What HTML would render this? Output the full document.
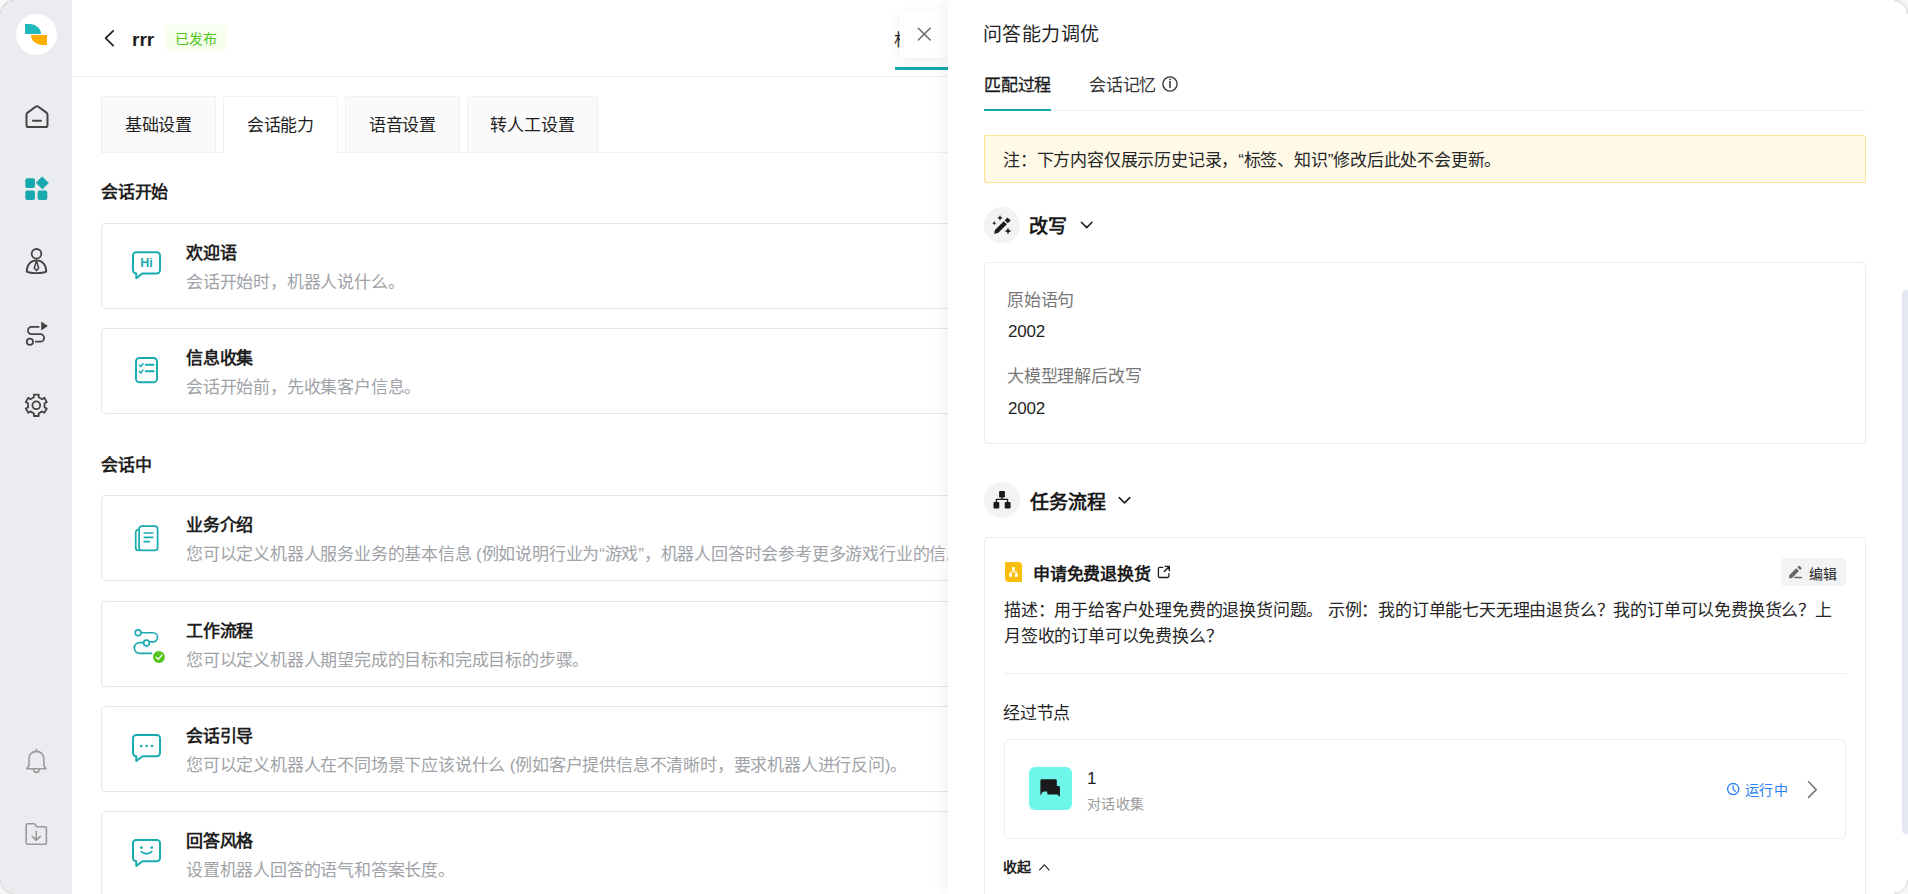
<!DOCTYPE html>
<html lang="zh-CN"><head><meta charset="utf-8">
<style>
*{box-sizing:border-box;margin:0;padding:0}
html,body{width:1908px;height:894px;overflow:hidden;background:#fff}
body{font-family:"Liberation Sans",sans-serif;color:#1f1f1f;position:relative}
.abs{position:absolute}
svg.abs{overflow:visible}
#sidebar{position:absolute;left:0;top:0;width:72px;height:894px;background:#ebecf0}
#main{position:absolute;left:72px;top:0;width:1836px;height:894px;background:#fff;overflow:hidden}
.rrr{font-size:19px;font-weight:bold;line-height:24px;color:#1f1f1f}
.tag{width:62px;height:26px;background:#f6ffed;color:#52c41a;font-size:14px;letter-spacing:0.3px;line-height:29px;text-align:center;border-radius:2px}
.hdr-line{position:absolute;left:0;top:76px;width:1836px;height:1px;background:#ededed}
.tab{position:absolute;top:96px;height:57px;border:1px solid #f0f0f0;border-bottom:none;background:#fafafa;border-radius:2px 2px 0 0;font-size:17px;letter-spacing:-0.2px;line-height:58px;text-align:center;color:#1f1f1f}
.tab.on{background:#fff;height:57px;z-index:2}
.tabline{position:absolute;top:152px;left:29px;height:1px;width:1800px;background:#f0f0f0}
.sec{position:absolute;left:29px;font-size:17px;letter-spacing:-0.2px;font-weight:bold;color:#1f1f1f;line-height:20px}
.card{position:absolute;left:29px;width:1780px;height:86px;border:1px solid #e8e8e8;border-radius:4px;background:#fff}
.card .t{position:absolute;left:84px;top:19px;font-size:17px;letter-spacing:-0.2px;font-weight:bold;line-height:22px;color:#1f1f1f;white-space:nowrap}
.card .d{position:absolute;left:84px;top:47.5px;font-size:17px;letter-spacing:-0.2px;line-height:22px;color:#a0a3a8;white-space:nowrap}
#drawer{position:absolute;left:948px;top:0;width:960px;height:894px;background:#fff;box-shadow:-4px 0 14px rgba(0,0,0,0.05);overflow:hidden}
.dtitle{font-size:19px;letter-spacing:0.4px;line-height:24px;color:#1f1f1f;white-space:nowrap}
.dtab{font-size:17px;letter-spacing:-0.2px;line-height:22px;white-space:nowrap}
.alert{background:#fff9e7;border:1px solid #ffe38c;border-radius:2px;font-size:17px;letter-spacing:-0.2px;line-height:50px;padding-left:18px;color:#262626;white-space:nowrap}
.circ{width:36px;height:36px;border-radius:50%;background:#f2f3f5}
.shdr{font-size:19px;letter-spacing:-0.1px;font-weight:bold;line-height:24px;color:#1a1a1a;white-space:nowrap}
.bcard{border:1px solid #ececec;border-radius:4px;background:#fff}
.lbl{font-size:17px;letter-spacing:-0.2px;line-height:22px;color:#787878;white-space:nowrap}
.num{font-size:17px;letter-spacing:-0.2px;line-height:22px;color:#1f1f1f;white-space:nowrap}
.bold17{font-size:17px;letter-spacing:-0.2px;font-weight:bold;line-height:22px;color:#1a1a1a;white-space:nowrap}
.editbtn{background:#f2f3f5;border-radius:4px;font-size:14px;letter-spacing:0.3px;line-height:18px;color:#262626}
.desc{font-size:17px;letter-spacing:-0.2px;line-height:26px;color:#262626;white-space:nowrap}
.small{font-size:14px;letter-spacing:0.3px;line-height:18px;color:#9a9a9a;white-space:nowrap}
.run{font-size:14px;letter-spacing:0.3px;line-height:18px;color:#2a7ff3;white-space:nowrap}
.shou{font-size:14px;letter-spacing:0.3px;font-weight:bold;line-height:18px;color:#1f1f1f;white-space:nowrap}
</style></head><body>
<div id="sidebar">
  <div class="abs" style="left:16px;top:14px;width:41px;height:41px;border-radius:50%;background:#fff"></div>
  <div class="abs" style="left:25px;top:24px;width:16px;height:10px;background:#22b9bd;border-top-right-radius:11px 10px"></div>
  <div class="abs" style="left:31px;top:35px;width:16px;height:10px;background:#ffae00;border-bottom-left-radius:11px 10px"></div>
  <svg class="abs" style="left:0;top:0" width="72" height="894" viewBox="0 0 72 894" fill="none" stroke-linecap="round" stroke-linejoin="round">
    <g stroke="#444" stroke-width="2">
      <path d="M35.6 106.7 a2.3 2.3 0 0 1 2.8 0 L46.4 112.6 a2.6 2.6 0 0 1 1.1 2.1 V124.9 a2.2 2.2 0 0 1 -2.2 2.2 H28.7 a2.2 2.2 0 0 1 -2.2 -2.2 V114.7 a2.6 2.6 0 0 1 1.1 -2.1 Z"/>
      <path d="M33 120.7 H41"/>
    </g>
    <g fill="#16a9ad">
      <rect x="25.3" y="178.3" width="9.7" height="9.6" rx="2"/>
      <rect x="25.3" y="190.4" width="9.7" height="9.6" rx="2"/>
      <rect x="37.6" y="190.4" width="9.7" height="9.6" rx="2"/>
      <path d="M42.4 177.2 L48.3 183 L42.4 188.8 L36.5 183 Z" stroke="#16a9ad" stroke-width="1" stroke-linejoin="round"/>
    </g>
    <g stroke="#444" stroke-width="1.8">
      <circle cx="36.5" cy="253.8" r="4.8"/>
      <path d="M26.7 271.6 C26.7 264.5 31 260.4 36.5 260.4 C42 260.4 46.3 264.5 46.3 271.6 C42 273.6 31 273.6 26.7 271.6 Z"/>
      <path d="M36.5 260.6 L34.3 268.3 L36.5 270.6 L38.7 268.3 Z" stroke-width="1.5"/>
    </g>
    <g stroke="#444" stroke-width="1.8">
      <circle cx="29.9" cy="341.8" r="3.1"/>
      <path d="M38.6 326.9 H31.6 A3.65 3.65 0 0 0 31.6 334.2 H40.4 A3.7 3.7 0 0 1 40.4 341.6 H35.8"/>
    </g>
    <path d="M41.2 321.5 L47.9 326.1 L41.2 330.6 Z" fill="#444"/>
    <g stroke="#444" stroke-width="1.8">
      <path d="M32.20 398.20 L33.96 397.13 L33.83 394.58 L38.77 394.58 L38.64 397.13 L40.40 398.20 L42.20 399.19 L44.34 397.80 L46.82 402.08 L44.55 403.24 L44.50 405.30 L44.55 407.36 L46.82 408.52 L44.34 412.80 L42.20 411.41 L40.40 412.40 L38.64 413.47 L38.77 416.02 L33.83 416.02 L33.96 413.47 L32.20 412.40 L30.40 411.41 L28.26 412.80 L25.78 408.52 L28.05 407.36 L28.10 405.30 L28.05 403.24 L25.78 402.08 L28.26 397.80 L30.40 399.19 Z"/>
      <circle cx="36.3" cy="405.3" r="3.9"/>
    </g>
    <g stroke="#9a9a9a" stroke-width="1.6">
      <path d="M26.8 768.8 L29 765.5 V758.5 C29 754.2 32.3 751.4 36.4 751.4 C40.5 751.4 43.8 754.2 43.8 758.5 V765.5 L46 768.8 Z"/>
      <path d="M36.4 749.6 V751.4"/>
      <path d="M33.6 769.6 A2.8 2.8 0 0 0 39.2 769.6"/>
    </g>
    <g stroke="#9a9a9a" stroke-width="1.6">
      <path d="M26.2 825 a1.2 1.2 0 0 1 1.2 -1.2 H34.4 L36.8 826.8 H45.2 a1.2 1.2 0 0 1 1.2 1.2 V843 a1.2 1.2 0 0 1 -1.2 1.2 H27.4 a1.2 1.2 0 0 1 -1.2 -1.2 Z"/>
      <path d="M36.3 831.3 V840.4 M32.3 836.4 L36.3 840.4 L40.3 836.4"/>
    </g>
  </svg>
</div>
<div id="main">
  <svg class="abs" style="left:28px;top:26px" width="20" height="24" viewBox="100 26 20 24" fill="none"><path d="M113.2 30.8 L105.6 38.2 L113.2 45.6" stroke="#1f1f1f" stroke-width="1.7" stroke-linecap="round" stroke-linejoin="round"/></svg>
  <div class="abs rrr" style="left:60px;top:28px">rrr</div>
  <div class="abs tag" style="left:93px;top:25px">已发布</div>
  <div class="abs" style="left:810px;top:0;width:18px;height:76px;overflow:hidden"><div class="abs" style="left:12px;top:30px;font-size:17px;letter-spacing:-0.2px;line-height:22px;color:#1f1f1f">机</div></div>
  <div class="abs" style="left:823px;top:67px;width:60px;height:3px;background:#14a9ad"></div>
  <div class="hdr-line"></div>
  <div class="tab" style="left:29px;width:115px">基础设置</div>
  <div class="tab on" style="left:151px;width:115px">会话能力</div>
  <div class="tab" style="left:273px;width:115px">语音设置</div>
  <div class="tab" style="left:395px;width:131px">转人工设置</div>
  <div class="tabline"></div>
  <div class="sec" style="top:182.5px">会话开始</div>
  <div class="card" style="top:223px"><div class="t">欢迎语</div><div class="d">会话开始时，机器人说什么。</div></div>
  <div class="card" style="top:328px"><div class="t">信息收集</div><div class="d">会话开始前，先收集客户信息。</div></div>
  <div class="sec" style="top:455.5px">会话中</div>
  <div class="card" style="top:495px"><div class="t">业务介绍</div><div class="d">您可以定义机器人服务业务的基本信息 (例如说明行业为“游戏”，机器人回答时会参考更多游戏行业的信息)。</div></div>
  <div class="card" style="top:601px"><div class="t">工作流程</div><div class="d">您可以定义机器人期望完成的目标和完成目标的步骤。</div></div>
  <div class="card" style="top:706px"><div class="t">会话引导</div><div class="d">您可以定义机器人在不同场景下应该说什么 (例如客户提供信息不清晰时，要求机器人进行反问)。</div></div>
  <div class="card" style="top:811px"><div class="t">回答风格</div><div class="d">设置机器人回答的语气和答案长度。</div></div>
</div>
<svg class="abs" style="left:0;top:0" width="948" height="894" viewBox="0 0 948 894" fill="none" stroke-linecap="round" stroke-linejoin="round">
  <g stroke="#19abb0" stroke-width="2">
    <path d="M136.2 252.3 H156.8 a3.2 3.2 0 0 1 3.2 3.2 V270.2 a3.2 3.2 0 0 1 -3.2 3.2 H142.5 L136.3 278.2 V273.4 H136.2 a3.2 3.2 0 0 1 -3.2 -3.2 V255.5 a3.2 3.2 0 0 1 3.2 -3.2 Z"/>
    <rect x="136" y="358" width="21" height="24.3" rx="3.6"/>
    <path d="M139.3 365.2 L140.9 366.6 L143 363.7 M139.3 371.6 L140.9 373 L143 370.1" stroke-width="1.5"/>
    <path d="M145.8 364.7 H153.6 M145.8 371.2 H153.6"/>
    <path d="M139 529.6 a3 3 0 0 0 -3.3 3 V547.5 a3 3 0 0 0 3 3" stroke-width="1.7"/>
    <rect x="139.1" y="526.1" width="18.5" height="24.3" rx="3" stroke-width="1.7"/>
    <path d="M144.3 533 H152.7 M144.3 537.3 H152.7 M144.3 541.6 H149.3" stroke-width="1.7"/>
    <path d="M136.2 734.9 H156.8 a3.2 3.2 0 0 1 3.2 3.2 V753.1 a3.2 3.2 0 0 1 -3.2 3.2 H142.5 L136.3 761.0 V756.3 H136.2 a3.2 3.2 0 0 1 -3.2 -3.2 V738.1 a3.2 3.2 0 0 1 3.2 -3.2 Z"/>
    <path d="M136.2 839.9 H156.8 a3.2 3.2 0 0 1 3.2 3.2 V858.1 a3.2 3.2 0 0 1 -3.2 3.2 H142.5 L136.3 866.0 V861.3 H136.2 a3.2 3.2 0 0 1 -3.2 -3.2 V843.1 a3.2 3.2 0 0 1 3.2 -3.2 Z"/>
    <path d="M141.3 851.6 Q146.5 856 151.7 851.6" stroke-width="1.8"/>
    <circle cx="138.1" cy="632.8" r="2.9" stroke-width="1.6"/>
    <circle cx="146.5" cy="643" r="2.9" stroke-width="1.6"/>
    <path d="M141 632.8 H153 A4.3 4.3 0 0 1 153 641.9 H149.4 M143.6 642.6 H139.7 A5.4 5.4 0 0 0 139.7 653.4 H151.5" stroke-width="1.6"/>
  </g>
  <text x="146.5" y="267.3" font-family="Liberation Sans" font-weight="bold" font-size="12.5" fill="#19abb0" text-anchor="middle">Hi</text>
  <g fill="#19abb0"><circle cx="141.2" cy="746" r="1.3"/><circle cx="146.6" cy="746" r="1.3"/><circle cx="152" cy="746" r="1.3"/><circle cx="141.3" cy="847.6" r="1.4"/><circle cx="151.8" cy="847.6" r="1.4"/></g>
  <circle cx="158.9" cy="657" r="6.8" fill="#fff"/>
  <circle cx="158.9" cy="657" r="5.9" fill="#52c41a"/>
  <path d="M156 657.2 L158.2 659.2 L161.9 655.1" stroke="#fff" stroke-width="1.4"/>
</svg>
<div class="abs" style="left:900px;top:10px;width:48px;height:48px;background:#fff;box-shadow:0 3px 10px rgba(0,0,0,0.07)">
  <svg class="abs" style="left:0;top:0" width="48" height="48" viewBox="900 10 48 48"><path d="M918.3 28.2 L930.2 40.1 M930.2 28.2 L918.3 40.1" stroke="#666" stroke-width="1.4" stroke-linecap="round"/></svg>
</div>
<div id="drawer">
  <div class="abs dtitle" style="left:35px;top:23px">问答能力调优</div>
  <div class="abs dtab" style="left:36px;top:74.5px;color:#1a1a1a;-webkit-text-stroke:0.3px #1a1a1a">匹配过程</div>
  <div class="abs dtab" style="left:141px;top:74.5px;color:#333">会话记忆</div>
  <div class="abs" style="left:36px;top:110px;width:882px;height:1px;background:#ececec"></div>
  <div class="abs" style="left:36px;top:109px;width:67px;height:2px;background:#14a9ad"></div>
  <div class="abs alert" style="left:36px;top:135px;width:882px;height:48px">注：下方内容仅展示历史记录，“标签、知识”修改后此处不会更新。</div>
  <div class="abs circ" style="left:36px;top:207px"></div>
  <div class="abs shdr" style="left:81px;top:215px">改写</div>
  <div class="abs bcard" style="left:36px;top:262px;width:882px;height:182px">
    <div class="abs lbl" style="left:22px;top:26.5px">原始语句</div>
    <div class="abs num" style="left:23px;top:58px">2002</div>
    <div class="abs lbl" style="left:22px;top:103px">大模型理解后改写</div>
    <div class="abs num" style="left:23px;top:135px">2002</div>
  </div>
  <div class="abs circ" style="left:36px;top:482px"></div>
  <div class="abs shdr" style="left:82px;top:490.5px">任务流程</div>
  <div class="abs bcard" style="left:36px;top:537px;width:882px;height:400px">
    <div class="abs bold17" style="left:48px;top:25.5px">申请免费退换货</div>
    <div class="abs editbtn" style="left:796px;top:20px;width:65px;height:28px"><span style="position:absolute;left:28px;top:6.5px">编辑</span></div>
    <div class="abs desc" style="left:19px;top:60px">描述：用于给客户处理免费的退换货问题。 示例：我的订单能七天无理由退货么？我的订单可以免费换货么？上<br>月签收的订单可以免费换么？</div>
    <div class="abs" style="left:19px;top:135px;width:842px;height:1px;background:#ececec"></div>
    <div class="abs lbl" style="left:18px;top:165px;color:#1f1f1f">经过节点</div>
    <div class="abs bcard" style="left:19px;top:201px;width:842px;height:100px;border-radius:6px">
      <div class="abs" style="left:24px;top:27px;width:43px;height:43px;border-radius:6px;background:#6ff6ea"></div>
      <div class="abs num" style="left:82px;top:28px">1</div>
      <div class="abs small" style="left:82px;top:54.5px">对话收集</div>
      <div class="abs run" style="left:740px;top:40.5px">运行中</div>
    </div>
    <div class="abs shou" style="left:18px;top:320px">收起</div>
  </div>
  <div class="abs" style="left:954px;top:290px;width:8px;height:544px;border-radius:4px;background:#e3e8f3"></div>
  <svg class="abs" style="left:0;top:0" width="960" height="894" viewBox="948 0 960 894" fill="none" stroke-linecap="round" stroke-linejoin="round">
    <circle cx="1170" cy="84" r="7.1" stroke="#333" stroke-width="1.4"/>
    <path d="M1170 81.6 V87.6" stroke="#333" stroke-width="1.5"/><circle cx="1170" cy="79.3" r="0.9" fill="#333"/>
    <path d="M1081.4 222.3 L1086.7 227.6 L1092 222.3" stroke="#1f1f1f" stroke-width="1.6"/>
    <path d="M1119.2 497.6 L1124.5 502.9 L1129.8 497.6" stroke="#1f1f1f" stroke-width="1.6"/>
    <g fill="#1a1a1a">
      <path d="M994.1 233.8 L994.91 229.97 L1003.75 221.13 L1006.87 224.25 L998.03 233.09 Z"/>
      <path d="M1004.67 220.21 L1007.5 217.38 L1010.62 220.5 L1007.79 223.33 Z"/>
      <path d="M1008.00 227.60 L1009.01 229.99 L1011.40 231.00 L1009.01 232.01 L1008.00 234.40 L1006.99 232.01 L1004.60 231.00 L1006.99 229.99 Z"/>
      <path d="M1000.00 215.10 L1000.83 217.07 L1002.80 217.90 L1000.83 218.73 L1000.00 220.70 L999.17 218.73 L997.20 217.90 L999.17 217.07 Z"/>
      <path d="M994.30 221.10 L994.92 222.58 L996.40 223.20 L994.92 223.82 L994.30 225.30 L993.68 223.82 L992.20 223.20 L993.68 222.58 Z"/>
    </g>
    <g fill="#1a1a1a">
      <rect x="999.1" y="491.1" width="5.8" height="6.4" rx="0.8"/>
      <rect x="993.5" y="502.1" width="5.8" height="6.5" rx="0.8"/>
      <rect x="1004.7" y="502.1" width="5.9" height="6.5" rx="0.8"/>
    </g>
    <path d="M1002 497.5 V499.4 M996.4 502.2 V499.4 H1007.6 V502.2" stroke="#1a1a1a" stroke-width="1.3"/>
    <path d="M1005 562 H1018 A4 4 0 0 1 1022 566 V582 H1009 A4 4 0 0 1 1005 578 Z" fill="#fbbc0a"/>
    <g fill="#fff"><rect x="1012.2" y="567" width="2.6" height="3.6"/><rect x="1009.2" y="573.3" width="2.8" height="3.5"/><rect x="1015" y="573.3" width="2.8" height="3.5"/></g>
    <path d="M1013.5 570.6 V571.9 M1010.6 573.3 V571.9 H1016.4 V573.3" stroke="#fff" stroke-width="0.9"/>
    <path d="M1162.6 567.4 H1159.8 a1.4 1.4 0 0 0 -1.4 1.4 V576.1 a1.4 1.4 0 0 0 1.4 1.4 H1167.5 a1.4 1.4 0 0 0 1.4 -1.4 V573.7" stroke="#1a1a1a" stroke-width="1.3"/>
    <path d="M1164.3 571.4 L1169.2 566.5 M1165.2 566.4 H1169.3 V570.5" stroke="#1a1a1a" stroke-width="1.4"/>
    <path d="M1789.2 578.2 L1789.2 575.3 L1796.3 568.2 L1799 570.9 L1791.8 578.2 Z" fill="#666"/>
    <path d="M1799 567.1 L1800.3 568.4" stroke="#666" stroke-width="2.6" stroke-linecap="round"/>
    <path d="M1794.8 577.5 H1801.3" stroke="#666" stroke-width="1.5"/>
    <g fill="#1a1a1a">
      <path d="M1041.6 779.3 H1055.5 Q1056.8 779.3 1056.8 780.6 V786 H1058.6 Q1059.9 786 1059.9 787.3 V796.8 L1057.4 794.6 H1048.5 Q1047.2 794.6 1047.2 793.3 V791.6 H1044.4 Q1042.2 791.6 1040.4 795.8 V780.6 Q1040.4 779.3 1041.6 779.3 Z"/>
    </g>
    <circle cx="1733.2" cy="789.1" r="5.6" stroke="#2a7ff3" stroke-width="1.3"/>
    <path d="M1733.2 785.8 V789.3 L1735.3 791.2" stroke="#2a7ff3" stroke-width="1.3"/>
    <path d="M1808.5 781.8 L1816.3 789.6 L1808.5 797.4" stroke="#777" stroke-width="1.5"/>
    <path d="M1039.6 869.8 L1044.3 864.8 L1049 869.8" stroke="#1f1f1f" stroke-width="1.1"/>
  </svg>
</div>
<svg class="abs" style="left:0;top:0;z-index:50;pointer-events:none" width="1908" height="894" viewBox="0 0 1908 894" fill="none">
  <path d="M0 0 H14 A14 14 0 0 0 0 14 Z" fill="#f8f8f6"/>
  <path d="M1908 0 H1894 A14 14 0 0 1 1908 14 Z" fill="#f6f6f6"/>
  <path d="M1908 894 H1894 A14 14 0 0 0 1908 880 Z" fill="#f6f6f6"/>
  <path d="M0 894 H14 A14 14 0 0 1 0 880 Z" fill="#f6f6f6"/>
  <g stroke="#d9d9d9" stroke-width="1.6" opacity="0.8">
    <path d="M14 0.6 A13.4 13.4 0 0 0 0.6 14"/>
    <path d="M1894 0.6 A13.4 13.4 0 0 1 1907.4 14"/>
    <path d="M1907.4 880 A13.4 13.4 0 0 1 1894 893.4"/>
    <path d="M0.6 880 A13.4 13.4 0 0 0 14 893.4"/>
  </g>
</svg>
</body></html>
